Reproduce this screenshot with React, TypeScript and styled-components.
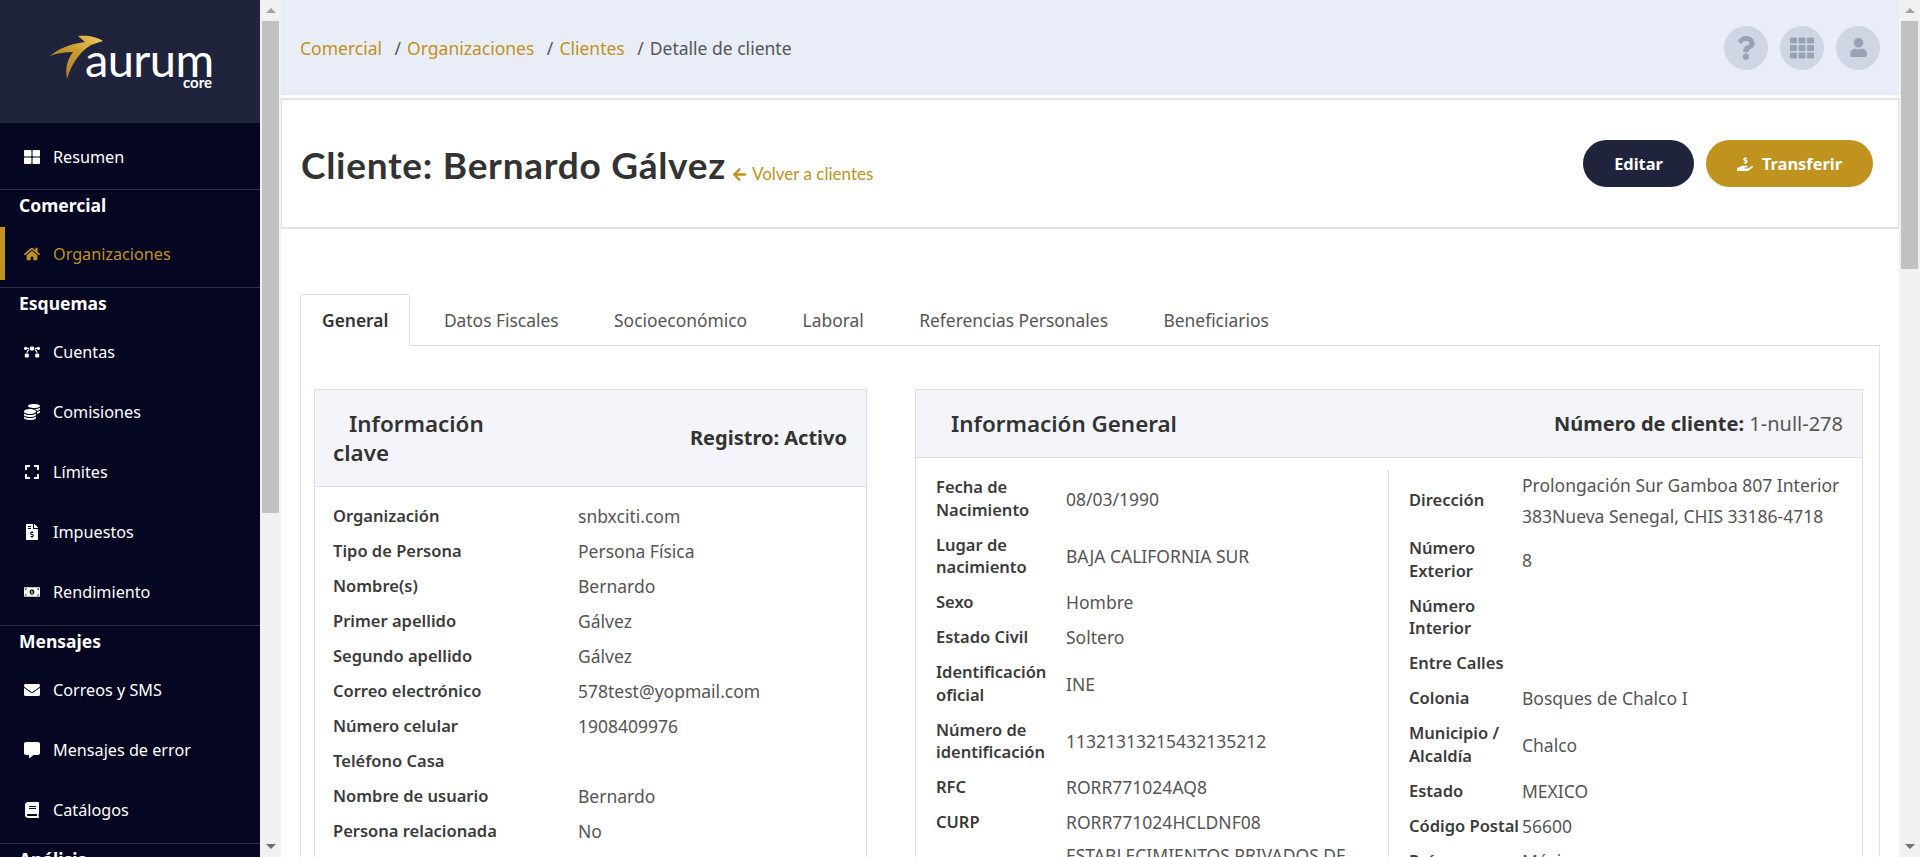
import React from "react";
import styled, { createGlobalStyle } from "styled-components";
import {
  FaThLarge, FaHome, FaBezierCurve, FaCoins, FaExpand, FaFileInvoiceDollar, FaMoneyBillAlt,
  FaEnvelope, FaCommentAlt, FaBook, FaChartBar, FaQuestion, FaTh, FaUser, FaHandHoldingUsd, FaArrowLeft,
} from "react-icons/fa";

const Global = createGlobalStyle`
  * { box-sizing: border-box; }
  html, body { margin: 0; height: 100%; overflow: hidden; }
  body { font-family: "Noto Sans", "Open Sans", sans-serif; color: #333; background: #fff; }
`;

const Shell = styled.div`
  display: flex;
  height: 857px;
  width: 1920px;
  overflow: hidden;
`;

const Sidebar = styled.aside`
  flex: 0 0 260px;
  height: 100%;
  overflow: hidden;
  background: #040622;
`;

const Rail = styled.div`
  flex: 0 0 21px;
  height: 100%;
  background: #f1f1f1;
  display: flex;
  flex-direction: column;
  align-items: center;
`;

const RailEnd = styled.div`
  flex: 0 0 21px;
  display: flex;
  align-items: center;
  justify-content: center;
`;

const RailArrow = styled.span<{ $down?: boolean }>`
  width: 0;
  height: 0;
  border-left: 5px solid transparent;
  border-right: 5px solid transparent;
  border-bottom: ${(p) => (p.$down ? "0" : "5px solid #a3a3a3")};
  border-top: ${(p) => (p.$down ? "5px solid #6e6e6e" : "0")};
`;

const RailTrack = styled.div`
  flex: 1;
  width: 17px;
`;

const RailThumb = styled.div<{ $height: number }>`
  width: 17px;
  height: ${(p) => p.$height}px;
  background: #c1c1c1;
`;

const LogoArea = styled.div`
  height: 123px;
  background: #20233c;
`;

const LogoBox = styled.div`
  position: relative;
  width: 260px;
  height: 123px;
`;

const LogoMark = styled.svg`
  position: absolute;
  left: 0;
  top: 0;
`;

const LogoWord = styled.span`
  position: absolute;
  left: 85px;
  top: 44px;
  font-family: "Lato", sans-serif;
  font-size: 47px;
  line-height: 30px;
  letter-spacing: -0.6px;
  font-weight: 400;
  color: #fff;
`;

const LogoSub = styled.span`
  position: absolute;
  left: 183px;
  top: 76px;
  font-family: "Lato", sans-serif;
  font-size: 15px;
  line-height: 12px;
  font-weight: 700;
  color: #fff;
`;

const Group = styled.nav<{ $first?: boolean }>`
  padding-top: ${(p) => (p.$first ? "4px" : "0")};
  padding-bottom: ${(p) => (p.$first ? "2px" : "3px")};
  border-bottom: 1px solid #2f3149;
`;

const GroupTitle = styled.div`
  height: 34px;
  padding: 3px 0 0 19px;
  font-size: 17.5px;
  line-height: 24px;
  font-weight: 700;
  color: #fff;
`;

const Item = styled.a<{ $active?: boolean }>`
  position: relative;
  display: flex;
  align-items: center;
  height: 60px;
  padding-left: 24px;
  padding-bottom: 1px;
  font-size: 16.2px;
  color: ${(p) => (p.$active ? "#c0921e" : "#fff")};
  &::before {
    content: "";
    display: ${(p) => (p.$active ? "block" : "none")};
    position: absolute;
    left: 0;
    top: 3px;
    bottom: 4px;
    width: 5px;
    background: #c0921e;
  }
  svg {
    width: 16px;
    height: 16px;
    margin-right: 13px;
    flex: none;
  }
`;

const Main = styled.main`
  flex: 1;
  min-width: 0;
  height: 100%;
  overflow: hidden;
  background: #fff;
`;

const TopBar = styled.header`
  height: 95px;
  background: #e9edf7;
  display: flex;
  align-items: center;
  justify-content: space-between;
  padding: 0 19px;
`;

const Crumbs = styled.ol`
  display: flex;
  list-style: none;
  margin: 0;
  padding: 0;
  font-size: 17.5px;
  line-height: 24px;
  gap: 12.5px;
  color: #555;
`;

const Crumb = styled.li<{ $link?: boolean }>`
  color: #555;
  span {
    margin-left: 1.5px;
    color: ${(p) => (p.$link ? "#c0921e" : "#555")};
  }
  &:first-child span { margin-left: 0; }
`;

const TopActions = styled.div`
  display: flex;
  gap: 12px;
`;

const RoundBtn = styled.button`
  width: 44px;
  height: 44px;
  border: 0;
  padding: 0;
  border-radius: 50%;
  background: #cfd5e2;
  color: #98a2b5;
  display: flex;
  align-items: center;
  justify-content: center;
`;

const HeadCard = styled.section`
  margin-top: 3px;
  height: 131px;
  border-style: solid;
  border-color: #e0e2ec;
  border-width: 2px 1px 2px 1px;
  display: flex;
  align-items: center;
  justify-content: space-between;
  padding: 0 25px 0 19px;
`;

const TitleRow = styled.div`
  display: flex;
  align-items: flex-end;
  gap: 6px;
  margin-top: 3px;
`;

const Title = styled.h1`
  margin: 0;
  font-family: "Lato", sans-serif;
  font-size: 37px;
  line-height: 46px;
  letter-spacing: 0.72px;
  font-weight: 700;
  color: #333;
`;

const BackLink = styled.a`
  display: inline-flex;
  align-items: center;
  gap: 5px;
  padding-bottom: 2px;
  font-family: "Lato", sans-serif;
  font-size: 17px;
  line-height: 24px;
  color: #c0921e;
`;

const Buttons = styled.div`
  display: flex;
  gap: 12px;
`;

const PillBtn = styled.button<{ $gold?: boolean }>`
  height: 47px;
  width: ${(p) => (p.$gold ? "167px" : "111px")};
  border: 0;
  border-radius: 24px;
  background: ${(p) => (p.$gold ? "#c0921e" : "#20233c")};
  color: #fff;
  font-family: "Noto Sans", sans-serif;
  font-size: 16.4px;
  font-weight: 700;
  display: flex;
  align-items: center;
  justify-content: center;
  gap: 9px;
`;

const Content = styled.div`
  padding: 65px 19px 0 19px;
`;

const Tabs = styled.div`
  display: flex;
  gap: 11.5px;
  height: 52px;
  border-bottom: 1px solid #dee2e6;
`;

const Tab = styled.div<{ $active?: boolean }>`
  height: 52px;
  padding: 0 21px 1px;
  display: flex;
  align-items: center;
  font-size: 17.4px;
  font-weight: ${(p) => (p.$active ? 600 : 400)};
  color: ${(p) => (p.$active ? "#333" : "#555")};
  background: ${(p) => (p.$active ? "#fff" : "transparent")};
  border: 1px solid ${(p) => (p.$active ? "#dee2e6" : "transparent")};
  border-bottom-color: ${(p) => (p.$active ? "#fff" : "transparent")};
  border-radius: 4px 4px 0 0;
`;

const Pane = styled.div`
  display: grid;
  grid-template-columns: 553px 948px;
  column-gap: 48px;
  align-items: start;
  padding: 43px 0 0 13px;
  border-left: 1px solid #dee2e6;
  border-right: 1px solid #dee2e6;
  min-height: 1200px;
`;

const Card = styled.article`
  border: 1px solid #d9deea;
  min-height: 1000px;
`;

const CardHead = styled.div<{ $tall?: boolean }>`
  height: ${(p) => (p.$tall ? "97px" : "68px")};
  background: #f4f5fb;
  border-bottom: 1px solid #d9deea;
  display: flex;
  align-items: center;
  justify-content: space-between;
  padding: 0 19px 0 18px;
`;

const CardTitle = styled.h2<{ $narrow?: boolean }>`
  margin: 0;
  width: ${(p) => (p.$narrow ? "170px" : "auto")};
  font-size: 22.4px;
  line-height: 29px;
  font-weight: 600;
  color: #333;
  text-indent: ${(p) => (p.$narrow ? "16px" : "17px")};
`;

const CardNote = styled.div`
  font-size: 20px;
  line-height: 26px;
  color: #333;
  span { font-weight: 400; color: #555; }
  strong { font-weight: 700; }
`;

const KeyBody = styled.div`
  padding: 12px 18px;
`;

const Row = styled.div<{ $label: number }>`
  display: grid;
  grid-template-columns: ${(p) => p.$label}px 1fr;
  align-items: center;
  min-height: 35px;
`;

const Label = styled.div`
  font-size: 16.5px;
  line-height: 22.75px;
  padding: 6px 0;
  font-weight: 600;
  color: #3b3b3b;
`;

const Value = styled.div`
  font-size: 17.5px;
  line-height: 30.5px;
  color: #555;
`;

const GeneralBody = styled.div`
  display: grid;
  grid-template-columns: 452px 1fr;
  padding: 12px 0 0 20px;
`;

const Col = styled.div<{ $divider?: boolean }>`
  border-left: ${(p) => (p.$divider ? "1px solid #d9deea" : "0")};
  padding-left: ${(p) => (p.$divider ? "20px" : "0")};
  padding-right: 14px;
`;

const keyRows: [string, string][] = [
  ["Organización", "snbxciti.com"],
  ["Tipo de Persona", "Persona Física"],
  ["Nombre(s)", "Bernardo"],
  ["Primer apellido", "Gálvez"],
  ["Segundo apellido", "Gálvez"],
  ["Correo electrónico", "578test@yopmail.com"],
  ["Número celular", "1908409976"],
  ["Teléfono Casa", ""],
  ["Nombre de usuario", "Bernardo"],
  ["Persona relacionada", "No"],
];

const leftRows: [string, string][] = [
  ["Fecha de Nacimiento", "08/03/1990"],
  ["Lugar de nacimiento", "BAJA CALIFORNIA SUR"],
  ["Sexo", "Hombre"],
  ["Estado Civil", "Soltero"],
  ["Identificación oficial", "INE"],
  ["Número de identificación", "11321313215432135212"],
  ["RFC", "RORR771024AQ8"],
  ["CURP", "RORR771024HCLDNF08"],
  ["Actividad", "ESTABLECIMIENTOS PRIVADOS DE EDUCACIÓN"],
];

const rightRows: [string, string][] = [
  ["Dirección", "Prolongación Sur Gamboa 807 Interior 383Nueva Senegal, CHIS 33186-4718"],
  ["Número Exterior", "8"],
  ["Número Interior", ""],
  ["Entre Calles", ""],
  ["Colonia", "Bosques de Chalco I"],
  ["Municipio / Alcaldía", "Chalco"],
  ["Estado", "MEXICO"],
  ["Código Postal", "56600"],
  ["País", "México"],
];

const Logo = () => (
  <LogoBox>
    <LogoMark width="130" height="100" viewBox="0 0 130 100" aria-hidden="true">
      <defs>
        <linearGradient id="gold" x1="0" y1="1" x2="1" y2="0">
          <stop offset="0" stopColor="#a67a22" />
          <stop offset="0.55" stopColor="#c99a30" />
          <stop offset="1" stopColor="#f0cb5c" />
        </linearGradient>
      </defs>
      <path
        d="M50 56 C58 49 69 44 85 42 L78 36 C88 35 97 37 103 41 L91 45 C79 52 71 65 67 79 C65 68 67 60 73 52 C65 52 57 53 50 56 Z"
        fill="url(#gold)"
      />
    </LogoMark>
    <LogoWord>aurum</LogoWord>
    <LogoSub>core</LogoSub>
  </LogoBox>
);

const FakeScrollbar = ({ thumb }: { thumb: number }) => (
  <Rail aria-hidden="true">
    <RailEnd><RailArrow /></RailEnd>
    <RailTrack><RailThumb $height={thumb} /></RailTrack>
    <RailEnd><RailArrow $down /></RailEnd>
  </Rail>
);

export default function App() {
  return (
    <Shell>
      <Global />
      <Sidebar>
        <LogoArea><Logo /></LogoArea>
        <Group $first>
          <Item><FaThLarge />Resumen</Item>
        </Group>
        <Group>
          <GroupTitle>Comercial</GroupTitle>
          <Item $active><FaHome />Organizaciones</Item>
        </Group>
        <Group>
          <GroupTitle>Esquemas</GroupTitle>
          <Item><FaBezierCurve />Cuentas</Item>
          <Item><FaCoins />Comisiones</Item>
          <Item><FaExpand />Límites</Item>
          <Item><FaFileInvoiceDollar />Impuestos</Item>
          <Item><FaMoneyBillAlt />Rendimiento</Item>
        </Group>
        <Group>
          <GroupTitle>Mensajes</GroupTitle>
          <Item><FaEnvelope />Correos y SMS</Item>
          <Item><FaCommentAlt />Mensajes de error</Item>
          <Item><FaBook />Catálogos</Item>
        </Group>
        <Group>
          <GroupTitle>Análisis</GroupTitle>
          <Item><FaChartBar />Reportes</Item>
        </Group>
      </Sidebar>
      <FakeScrollbar thumb={492} />
      <Main>
        <TopBar>
          <Crumbs>
            <Crumb $link><span>Comercial</span></Crumb>
            <Crumb $link>/ <span>Organizaciones</span></Crumb>
            <Crumb $link>/ <span>Clientes</span></Crumb>
            <Crumb>/ <span>Detalle de cliente</span></Crumb>
          </Crumbs>
          <TopActions>
            <RoundBtn aria-label="Ayuda"><FaQuestion size={24} /></RoundBtn>
            <RoundBtn aria-label="Aplicaciones"><FaTh size={24} /></RoundBtn>
            <RoundBtn aria-label="Perfil"><FaUser size={19} /></RoundBtn>
          </TopActions>
        </TopBar>
        <HeadCard>
          <TitleRow>
            <Title>Cliente: Bernardo Gálvez</Title>
            <BackLink><FaArrowLeft size={15} />Volver a clientes</BackLink>
          </TitleRow>
          <Buttons>
            <PillBtn>Editar</PillBtn>
            <PillBtn $gold><FaHandHoldingUsd size={16} />Transferir</PillBtn>
          </Buttons>
        </HeadCard>
        <Content>
          <Tabs>
            <Tab $active>General</Tab>
            <Tab>Datos Fiscales</Tab>
            <Tab>Socioeconómico</Tab>
            <Tab>Laboral</Tab>
            <Tab>Referencias Personales</Tab>
            <Tab>Beneficiarios</Tab>
          </Tabs>
          <Pane>
            <Card>
              <CardHead $tall>
                <CardTitle $narrow>Información clave</CardTitle>
                <CardNote><strong>Registro: Activo</strong></CardNote>
              </CardHead>
              <KeyBody>
                {keyRows.map(([k, v]) => (
                  <Row key={k} $label={245}><Label>{k}</Label><Value>{v}</Value></Row>
                ))}
              </KeyBody>
            </Card>
            <Card>
              <CardHead>
                <CardTitle>Información General</CardTitle>
                <CardNote><strong>Número de cliente:</strong> <span>1-null-278</span></CardNote>
              </CardHead>
              <GeneralBody>
                <Col>
                  {leftRows.map(([k, v]) => (
                    <Row key={k} $label={130}><Label>{k}</Label><Value>{v}</Value></Row>
                  ))}
                </Col>
                <Col $divider>
                  {rightRows.map(([k, v]) => (
                    <Row key={k} $label={113}><Label>{k}</Label><Value>{v}</Value></Row>
                  ))}
                </Col>
              </GeneralBody>
            </Card>
          </Pane>
        </Content>
      </Main>
      <FakeScrollbar thumb={248} />
    </Shell>
  );
}
